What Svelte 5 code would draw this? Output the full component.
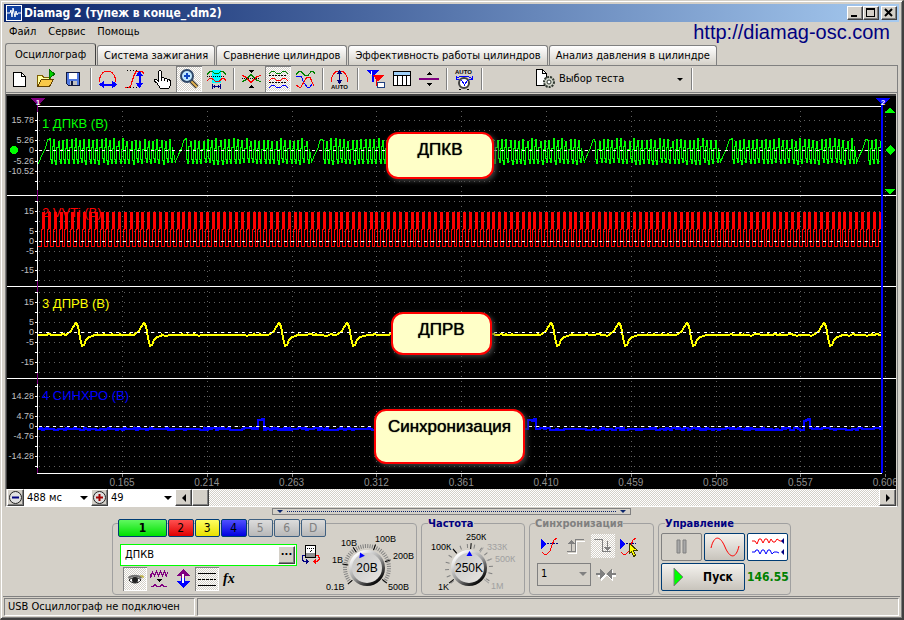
<script>
    let scopeWidth = $state(890);
    let channelName = $state("ДПКВ");
    let activeTab = $state(0);

    const tabs = [
        "Осциллограф",
        "Система зажигания",
        "Сравнение цилиндров",
        "Эффективность работы цилиндров",
        "Анализ давления в цилиндре",
    ];

    const tools = [
        { icon: "new", label: "Новый" },
        { icon: "open", label: "Открыть" },
        { icon: "save", label: "Сохранить" },
        null,
        { icon: "width", label: "Ширина" },
        { icon: "front", label: "Фронт" },
        { icon: "hand", label: "Сдвиг" },
        { icon: "zoom", label: "Масштаб", pressed: true },
        { icon: "range", label: "Диапазон" },
        null,
        { icon: "cross", label: "Совместить" },
        { icon: "split", label: "Разделить", pressed: true },
        { icon: "overlay", label: "Наложить" },
        null,
        { icon: "auto", label: "Авто" },
        null,
        { icon: "markers", label: "Маркеры" },
        { icon: "table", label: "Таблица" },
        { icon: "level", label: "Уровень" },
        null,
        { icon: "clock", label: "Авто время" },
        null,
    ];

    const channels = [
        { title: "1 ДПКВ (В)", color: "#00ff00", titleY: 33, zero: 54, top: 16, bottom: 94,
          rows: [24, 34, 44, 54, 65, 75, 85],
          labels: [["15.78", 24], ["5.26", 44], ["0", 54], ["-5.26", 65], ["-10.52", 75]] },
        { title: "2 VVTi (В)", color: "#ff0000", titleY: 122, zero: 145, top: 105, bottom: 185,
          rows: [105, 115, 125, 135, 145, 155, 164, 174, 184],
          labels: [["15", 115], ["5", 135], ["0", 145], ["-5", 155], ["-15", 174]] },
        { title: "3 ДПРВ (В)", color: "#ffff00", titleY: 213, zero: 236, top: 196, bottom: 277,
          rows: [196, 206, 216, 226, 236, 246, 256, 266, 276],
          labels: [["15", 206], ["5", 226], ["0", 236], ["-5", 246], ["-15", 266]] },
        { title: "4 СИНХРО (В)", color: "#0000ff", titleY: 305, zero: 330, top: 288, bottom: 372,
          rows: [290, 300, 310, 320, 330, 340, 350, 360, 370],
          labels: [["14.28", 300], ["4.76", 320], ["0", 330], ["-4.76", 340], ["-14.28", 360]] },
    ];

    const times = ["0.165", "0.214", "0.263", "0.312", "0.361", "0.410", "0.459", "0.508", "0.557", "0.606"];

    const notes = [
        { text: "ДПКВ", x: 379, y: 36, w: 108, h: 47 },
        { text: "ДПРВ", x: 384, y: 216, w: 101, h: 43 },
        { text: "Синхронизация", x: 367, y: 313, w: 151, h: 55 },
    ];

    const inputs = [
        { name: "1", tone: "green" },
        { name: "2", tone: "red" },
        { name: "3", tone: "yellow" },
        { name: "4", tone: "blue" },
        { name: "5", tone: "off" },
        { name: "6", tone: "off" },
        { name: "D", tone: "off" },
    ];

    // the traces are laid out on a strip 845 units wide
    const SPAN = 845;
    let plotWidth = $derived(scopeWidth - 44);
    let plotRight = $derived(30 + plotWidth);

    const gridX = (i) => 30 + ((85 + i * 84.8) / SPAN) * plotWidth;

    function noise(seed) {
        let s = seed;
        return () => {
            s = (s * 16807) % 2147483647;
            return s / 2147483647;
        };
    }

    function crankTrace() {
        const rnd = noise(11);
        let d = "M0 68";
        for (let g = 0; g < SPAN; g += 136.3) {
            d += `L${g + 1} 66L${g + 4} 59L${g + 7} 53L${g + 10} 43`;
            for (let x = g + 11; x < g + 134 && x < SPAN - 3; x += 4.3) {
                const a = Math.round(x) + 0.5;
                const top = 42 + Math.round(rnd() * 3);
                const low = 68 - Math.round(rnd() * 2);
                d += `H${a}V${top}H${a + 1}V${low - 4}H${a + 2}V${low}H${a + 3}V${top + 8}`;
            }
        }
        return d;
    }

    function pulseTrace() {
        let d = "M0 150";
        for (let x = 3; x < SPAN - 3; x += 5.85) {
            const a = Math.round(x) + 0.5;
            d += `H${a}V133H${a + 1}V116H${a + 2}V133V116H${a + 3}V150`;
        }
        return d + `H${SPAN}`;
    }

    function camTrace() {
        const rnd = noise(5);
        const peaks = [38, 106, 241, 309, 377, 513, 581, 649, 786];
        const shape = [
            [-9, -1], [-5, -4], [-3, -8], [0, -12], [2, -9], [4, 3], [6, 11],
            [8, 10], [10, 5], [13, 2], [17, 1],
        ];
        const points = [];
        for (let x = 0; x <= SPAN; x += 2) {
            if (!peaks.some((p) => x > p - 10 && x < p + 18)) {
                points.push([x, 239 + Math.round(rnd() * 2 - 1) * 0.6]);
            }
        }
        for (const p of peaks) {
            for (const [dx, dy] of shape) points.push([p + dx, 239 + dy]);
        }
        points.sort((a, b) => a[0] - b[0]);
        return "M" + points.map((p) => p.join(" ")).join("L");
    }

    function syncTrace() {
        const rnd = noise(7);
        let d = "M0 333";
        for (let x = 2; x <= SPAN; x += 2) {
            const high = [[220, 224], [489, 496], [765, 770]].some(([a, b]) => x >= a && x <= b);
            const jitter = Math.round(rnd() * 2 - 1);
            d += `H${x}V${(high ? 324 : 333) + jitter}`;
        }
        return d;
    }

    const traces = [
        { d: crankTrace(), color: "#00ff00", width: 1 },
        { d: pulseTrace(), color: "#ff0000", width: 1 },
        { d: camTrace(), color: "#ffff00", width: 2 },
        { d: syncTrace(), color: "#0000ff", width: 2 },
    ];

    const volts = {
        value: "20В",
        pointer: -24,
        step: 6,
        marks: [
            { text: "0.1В", x: 2, y: 60, angle: -130 },
            { text: "1В", x: 8, y: 33, angle: -81 },
            { text: "10В", x: 17, y: 16, angle: -34 },
            { text: "100В", x: 51, y: 12, angle: 20 },
            { text: "200В", x: 69, y: 29, angle: 71 },
            { text: "500В", x: 64, y: 60, angle: 127 },
        ],
    };

    const rate = {
        value: "250K",
        pointer: 2,
        step: 18,
        marks: [
            { text: "1K", x: 12, y: 60, angle: -127 },
            { text: "100К", x: 5, y: 20, angle: -40 },
            { text: "250К", x: 40, y: 10, angle: 5 },
            { text: "333К", x: 61, y: 20, angle: 35, off: true },
            { text: "500К", x: 69, y: 32, angle: 68, off: true },
            { text: "1М", x: 65, y: 59, angle: 127, off: true },
        ],
    };

    function ring(step) {
        const out = [];
        for (let a = -130; a <= 130; a += step) out.push(a);
        return out;
    }
</script>

{#snippet icon(name)}
    <svg width="24" height="24" viewBox="0 0 24 24" fill="none" shape-rendering="crispEdges" aria-hidden="true">
        {#if name === "new"}
            <path d="M6.500 5.500h8l4 4v10h-12z" fill="#fff" stroke="#000" />
            <path d="M14.500 5.500v4h4" stroke="#000" />
        {:else if name === "open"}
            <path d="M3.500 19.500v-11h5l1 2h7v3" fill="#ffffa0" stroke="#806000" />
            <path d="M3.500 19.500l4-7h12l-4 7z" fill="#f8c848" stroke="#604000" />
            <path d="M15.500 2.500l5 4.500l-5 4.500z" fill="#00d000" stroke="#007000" />
        {:else if name === "save"}
            <path d="M5.500 5.500h13v13h-11l-2-2z" fill="#5078e0" stroke="#101840" />
            <rect x="8" y="6" width="8" height="6" fill="#fff" />
            <rect x="9" y="14" width="7" height="4" fill="#c0c0c0" />
            <rect x="10" y="14" width="2" height="4" fill="#101840" />
        {:else if name === "width"}
            <path d="M3.500 15v-3l1-3l2-3l3-2h4l3 2l2 3l1 3v3" stroke="#f00" />
            <path d="M6 17.500h12" stroke="#00f" stroke-width="2" />
            <path d="M3 17.500l5-4v8zM21 17.500l-5-4v8z" fill="#00f" />
        {:else if name === "front"}
            <path d="M2 20.500h4l2-2l1-4l2-6l2-4h6l2 2" stroke="#f00" />
            <path d="M4 3.500h12M4 20.500h14" stroke="#000" stroke-dasharray="1 2" />
            <path d="M16.500 8v9" stroke="#00f" stroke-width="2" />
            <path d="M16.500 4l-4 5h8zM16.500 21l-4-5h8z" fill="#00f" />
        {:else if name === "hand"}
            <path
                d="M8.500 14.500v-10l1-1h1l1 1v6h2l1 1h2l1 1h2l1 2v4l-2 3h-8l-4-6l-2-1v-2h2z"
                fill="#fff" stroke="#000"
            />
            <path d="M11.500 10v4M14.500 11v3M17.500 12v3" stroke="#000" />
        {:else if name === "zoom"}
            <g shape-rendering="auto">
                <path d="M14 14l6 6" stroke="#303030" stroke-width="4" />
                <path d="M14 14l6 6" stroke="#e0b050" stroke-width="2" />
                <circle cx="10" cy="9" r="6" fill="#c0e8ff" stroke="#304868" stroke-width="2" />
                <path d="M7 9h6M10 6v6" stroke="#1048c0" stroke-width="2" />
            </g>
        {:else if name === "range"}
            <rect x="8" y="3" width="9" height="13" fill="#0ff" />
            <path d="M3 7.500l3-3h2l3 2h3l3-2h2l3 3" stroke="#008000" />
            <path d="M3 9.500h18" stroke="#000" stroke-dasharray="1 1" />
            <path d="M3 13.500l3-2h2l4 3h3l3-3h2l2 2" stroke="#f00" />
            <path d="M8 19.500h9M8.500 17v5M16.500 17v5M10.500 18v3M14.500 18v3" stroke="#000080" />
        {:else if name === "cross"}
            <path d="M3 14.500l3-1l6-6l6 6l4 1" stroke="#008000" />
            <path d="M3 8.500l3 1l6 6l6-6l4-1" stroke="#f00" />
            <path d="M3 11.500h18" stroke="#000" stroke-dasharray="1 1" />
            <path d="M9 3h6l-3 3zM9 21h6l-3-3z" fill="#000" />
        {:else if name === "split"}
            <path d="M3 6.500l3-2h2l3 2h3l3-2h2l3 2" stroke="#008000" />
            <path d="M3 8.500h18M3 15.500h18" stroke="#000" stroke-dasharray="2 1" />
            <path d="M3 13.500l3-2h2l3 2h3l3-2h2l3 2" stroke="#f00" />
            <path d="M3 20.500l3-2h2l3 2h3l3-2h2l3 2" stroke="#00f" />
        {:else if name === "overlay"}
            <path d="M3 7.500l3-3h2l4 4h3l3-4h2l2 2" stroke="#008000" />
            <path d="M3 10l3-1h2l3 7l3 4h3l3-4" stroke="#00f" />
            <path d="M3 18l3 2h2l3-5l3-5h3l2 5l2 4" stroke="#f00" />
        {:else if name === "auto"}
            <path d="M3.500 15v-4l2-4l3-3h6l3 3l2 4v4" stroke="#f00" />
            <path d="M11.500 5v10" stroke="#000080" />
            <path d="M11.500 3l-3 4h6zM11.500 17l-3-4h6z" fill="#000080" />
            <text x="3" y="22" class="tiny">AUTO</text>
        {:else if name === "markers"}
            <path d="M3 3h13l-5 6v6h-2v-6z" fill="#00f" />
            <path d="M10 8h11l-5 6h-2z" fill="#f00" />
            <path d="M13.500 11v8" stroke="#f00" />
            <path d="M14.500 15.500h7v5h-7z" fill="#fff" stroke="#204080" />
            <path d="M8.500 4v4" stroke="#fff" />
        {:else if name === "table"}
            <rect x="3" y="4" width="18" height="4" fill="#a0d0f8" />
            <rect x="3" y="8" width="18" height="11" fill="#fff" />
            <path d="M3.500 4.500h17v14h-17zM3 8.500h18M7.500 8v10M12.500 8v10M16.500 8v10" stroke="#000" />
        {:else if name === "level"}
            <path d="M2 12h20" stroke="#800080" stroke-width="2" />
            <path d="M9 8h6l-3-3zM9 16h6l-3 3z" fill="#000" />
        {:else if name === "clock"}
            <text x="3" y="7" class="tiny">AUTO</text>
            <circle cx="12" cy="16" r="5" fill="#fff" stroke="#404040" stroke-width="2" shape-rendering="auto" />
            <path d="M9.500 13l3 5l3-5" stroke="#00f" />
            <path d="M4 12c4-4 12-4 16 0M4 9v3h3M20 9v3h-3" stroke="#00f" />
            <path d="M7 22h2M15 22h2" stroke="#000" />
        {:else if name === "test"}
            <path d="M4.500 2.500h6l4 4v12h-10z" fill="#fff" stroke="#000" />
            <path d="M10.500 2.500v4h4" stroke="#000" />
            <g shape-rendering="auto">
                <circle cx="17" cy="15" r="5" fill="#d0d4c8" stroke="#303830" stroke-width="2" stroke-dasharray="2 1" />
                <circle cx="17" cy="15" r="2" fill="#fff" stroke="#303830" />
            </g>
        {:else if name === "meter"}
            <rect x="7.500" y="2.500" width="10" height="12" fill="#fff" stroke="#000" />
            <rect x="8" y="10" width="9" height="4" fill="#909090" />
            <path d="M9 5.500h7M12 9l3-3" stroke="#000" stroke-dasharray="1 1" />
            <path d="M7 12.500h-2l-1 2v2l2 2h2" stroke="#000080" />
            <path d="M8 15l3 3.500l-3 3.500z" fill="#000080" />
            <path d="M18 12.500h2l1 2v2l-2 2h-2" stroke="#f00" />
            <path d="M18 15l-3 3.500l3 3.500z" fill="#f00" />
        {:else if name === "eye"}
            <g shape-rendering="auto">
                <path d="M5 10c4-3 10-3 14 0l-1 2c-4-3-9-3-12 0z" fill="#707070" />
                <path d="M6 13c3-3 9-3 12 0c-3 4-9 4-12 0z" fill="#fff" stroke="#202020" />
                <circle cx="12" cy="13" r="3" fill="#202020" />
                <path d="M17 9h3v2" stroke="#b0a000" />
            </g>
        {:else if name === "smooth"}
            <path d="M3.500 7v3l2-5l2 3l2-4l2 4l2-4l2 4l2-4l2 5l1-4" stroke="#800080" />
            <path d="M3.500 8v3l2-5l2 3l2-4l2 4l2-4l2 4l2-4l2 5" stroke="#800080" />
            <path d="M9 12h6l-3 3z" fill="#000" />
            <path d="M4 19.500h2l2-2l2 2h3l2-2l2 2h3" stroke="#800080" />
        {:else if name === "updown"}
            <path d="M12 2l7 7h-5v3h-4v-3h-5z" fill="#800080" />
            <path d="M12 21l7-7h-5v-3h-4v3h-5z" fill="#00f" />
            <path d="M12 7v9" stroke="#fff" stroke-width="2" />
        {:else if name === "lines"}
            <path d="M3 6.500h18M3 18.500h18" stroke="#000" />
            <path d="M3 12.500h18" stroke="#000" stroke-dasharray="3 1" />
        {:else if name === "sync-edge"}
            <path d="M5 18l2 2h3l3-3l2-6l2-5l3-2" stroke="#f00" />
            <path d="M4 5l6 5l-6 5z" fill="#00f" />
            <path d="M10 9.500h11" stroke="#000080" stroke-dasharray="2 1" />
        {:else if name === "sync-rise"}
            <path d="M3 18.500h8v-12h9" stroke="#fff" transform="translate(1 1)" />
            <path d="M3 17.500h8v-12h9M7.500 8v9" stroke="#808080" />
            <path d="M4 10l3.500-4l3.500 4z" fill="#808080" />
        {:else if name === "sync-fall"}
            <path d="M3 5.500h8v12h9M16.500 7v8" stroke="#808080" />
            <path d="M13 13l3.500 4l3.500-4z" fill="#808080" />
        {:else if name === "sync-pick"}
            <path d="M3 18l2 2h3l3-3l2-6l2-5l3-2" stroke="#f00" />
            <path d="M2 5l6 5l-6 5z" fill="#00f" />
            <path d="M8 9.500h10" stroke="#000080" stroke-dasharray="2 1" />
            <path d="M11.500 9.500l8 7h-4l2 5l-2 1l-2-5l-2 2z" fill="#ff0" stroke="#404000" />
        {:else if name === "squeeze"}
            <path d="M3 11h3v-4l6 5l6-5v4h3v3h-3v4l-6-5l-6 5v-4h-3z" fill="#fff" transform="translate(1 1)" />
            <path d="M2 11h4v-4l6 5l6-5v4h4v2h-4v4l-6-5l-6 5v-4h-4z" fill="#808080" />
        {/if}
    </svg>
{/snippet}

{#snippet knob(k, id)}
    <svg class="knob" width="90" height="66" viewBox="2 0 90 66" role="img" aria-label={k.value}>
        <defs>
            <linearGradient id="rim-{id}" x1="0.200" y1="0.100" x2="0.800" y2="0.900">
                <stop offset="0" stop-color="#fff" />
                <stop offset="0.500" stop-color="#a0a0a0" />
                <stop offset="1" stop-color="#000" />
            </linearGradient>
            <linearGradient id="face-{id}" x1="0" y1="0" x2="1" y2="1">
                <stop offset="0" stop-color="#c4c4c4" />
                <stop offset="1" stop-color="#e8e6e2" />
            </linearGradient>
        </defs>
        {#each ring(k.step) as a}
            <path d="M43 18v-4" stroke="#808080" transform="rotate({a} 43 38)" />
        {/each}
        {#each k.marks as m}
            <path d="M43 19v-6" stroke={m.off ? "#a0a0a0" : "#000"} transform="rotate({m.angle} 43 38)" />
            <text x={m.x} y={m.y} class="scale" class:off={m.off}>{m.text}</text>
        {/each}
        <circle cx="43" cy="38" r="18" fill="url(#rim-{id})" />
        <circle cx="43" cy="38" r="15" fill="url(#face-{id})" />
        <path d="M43 21l3 5h-6z" fill="#00f" transform="rotate({k.pointer} 43 38)" />
        <text x="43" y="42" class="value">{k.value}</text>
    </svg>
{/snippet}

<div class="window">
    <header class="titlebar">
        <svg class="logo" width="16" height="16" viewBox="0 0 16 16" aria-hidden="true">
            <rect width="16" height="16" fill="#fff" />
            <rect x="1" y="1" width="14" height="14" fill="#1040a0" />
            <path d="M1 8h3l1-3l1 7l1-9l2 9l1-6l1 4l1-2h3" fill="none" stroke="#fff" />
        </svg>
        <h1>Diamag 2 (тупеж в конце_.dm2)</h1>
        <div class="winbuttons">
            <button class="raised" aria-label="Свернуть">
                <svg width="10" height="10"><path d="M1 8h6" stroke="#000" stroke-width="2" /></svg>
            </button>
            <button class="raised" aria-label="Развернуть">
                <svg width="10" height="10" shape-rendering="crispEdges"><path d="M0 1h9M.5 1v8M0 8.500h9M8.500 1v8" stroke="#000" fill="none" /><path d="M0 1h9" stroke="#000" stroke-width="2" /></svg>
            </button>
            <button class="raised close" aria-label="Закрыть">
                <svg width="10" height="10"><path d="M1 1l7 7M8 1l-7 7" stroke="#000" stroke-width="2" /></svg>
            </button>
        </div>
    </header>

    <nav class="menu">
        <button>Файл</button>
        <button>Сервис</button>
        <button>Помощь</button>
        <a href="http://diamag-osc.com">http://diamag-osc.com</a>
    </nav>

    <div class="tabs" role="tablist">
        {#each tabs as tab, i}
            <button role="tab" aria-selected={activeTab === i} class:active={activeTab === i} onclick={() => (activeTab = i)}>
                {tab}
            </button>
        {/each}
    </div>

    <main class="page">
        <div class="toolbar">
            {#each tools as tool}
                {#if tool}
                    <button class="tool" class:pressed={tool.pressed} aria-label={tool.label}>
                        {@render icon(tool.icon)}
                    </button>
                {:else}
                    <span class="sep"></span>
                {/if}
            {/each}
            <button class="test">
                {@render icon("test")}
                <span>Выбор теста</span>
                <i class="arrow"></i>
            </button>
            <span class="sep"></span>
        </div>

        <div class="scope" bind:clientWidth={scopeWidth}>
            <svg width="100%" height="393" shape-rendering="crispEdges">
                {#each channels as ch}
                    {#each ch.rows as y}
                        <path d="M32 {y + 0.5}H{plotRight}" stroke="#606060" stroke-dasharray="1 4" />
                        <path d="M28 {y + 0.5}h3" stroke="#fff" />
                    {/each}
                {/each}
                {#each times as t, i}
                    <path d="M{Math.round(gridX(i)) + 0.5} 15V377" stroke="#606060" stroke-dasharray="1 4" />
                    <path d="M{Math.round(gridX(i)) + 0.5} 378v3" stroke="#808080" />
                    <text x={gridX(i)} y="390" class="time">{t}</text>
                {/each}

                <path d="M30 10.500H{plotRight}M30 377.500H{plotRight}" stroke="#fff" />
                <path d="M0 99.500H{scopeWidth}M0 190.500H{scopeWidth}M0 282.500H{scopeWidth}" stroke="#fff" />
                <path d="M30.500 8V377" stroke="#800080" />

                {#each channels as ch}
                    <text x="35" y={ch.titleY - 1} class="title" fill={ch.color}>{ch.title}</text>
                    <path d="M30.500 {ch.top}V{ch.bottom}" stroke="#fff" />
                    {#each ch.labels as [text, y]}
                        <text x="27" y={y + 3} class="volt">{text}</text>
                    {/each}
                {/each}

                <svg x="31" y="0" width={plotWidth} height="393" viewBox="0 0 {SPAN} 393" preserveAspectRatio="none" fill="none">
                    {#each traces as t}
                        <path d={t.d} stroke={t.color} stroke-width={t.width} />
                    {/each}
                </svg>

                {#each channels as ch}
                    <path d="M32 {ch.zero + 0.5}H{plotRight}" stroke="#fff" stroke-dasharray="3 4" />
                {/each}

                <path d="M{plotRight} 8V377" stroke="#00f" stroke-width="2" />
                <path d="M23 2h15l-7 8z" fill="#800080" />
                <path d="M{plotRight - 7} 2h15l-7 8z" fill="#00f" />
                <text x="31" y="9" class="flag">1</text>
                <text x={plotRight + 1} y="9" class="flag">2</text>
                <circle cx="7" cy="54" r="4" fill="#0f0" />
                <path
                    d="M{plotRight + 3} 17l5-6l5 6zM{plotRight + 3} 54l5-5l5 5l-5 5zM{plotRight + 3} 93h10l-5 6z"
                    fill="#0f0"
                />
            </svg>
            {#each notes as n}
                <div class="note" style="left: {31 + ((n.x - 31) / SPAN) * plotWidth}px; top: {n.y}px; width: {n.w}px; height: {n.h}px">
                    {n.text}
                </div>
            {/each}
        </div>

        <div class="scrollrow">
            <button class="raised step" aria-label="Уменьшить">
                <svg width="13" height="13"><circle cx="6.500" cy="6.500" r="6" fill="#e0e0e0" stroke="#202020" /><path d="M3 6.500h7" stroke="#000080" stroke-width="2" /></svg>
            </button>
            <span class="combo">
                <select aria-label="Развёртка"><option>488 мс</option></select>
                <i class="arrow"></i>
            </span>
            <button class="raised step" aria-label="Увеличить">
                <svg width="13" height="13"><circle cx="6.500" cy="6.500" r="6" fill="#e0e0e0" stroke="#202020" /><path d="M3 6.500h7M6.500 3v7" stroke="#a00000" stroke-width="2" /></svg>
            </button>
            <span class="combo">
                <select aria-label="Точка"><option>49</option></select>
                <i class="arrow"></i>
            </span>
            <button class="raised step" aria-label="Влево">
                <svg width="10" height="10"><path d="M7 1v8l-4-4z" /></svg>
            </button>
            <div class="track"><span class="raised thumb"></span></div>
            <button class="raised step" aria-label="Вправо">
                <svg width="10" height="10"><path d="M3 1v8l4-4z" /></svg>
            </button>
        </div>
    </main>

    <div class="splitter">
        <i class="arrow"></i><span></span><i class="arrow"></i>
    </div>

    <section class="panel">
        <div class="group channel">
            <div class="settings">
                <div class="inputs">
                    {#each inputs as ch}
                        <button class={ch.tone} disabled={ch.tone === "off"}>{ch.name}</button>
                    {/each}
                </div>
                <div class="naming">
                    <div class="namebox">
                        <input type="text" aria-label="Название канала" bind:value={channelName} />
                        <button class="raised" aria-label="Выбрать датчик">···</button>
                    </div>
                    <button class="flat" aria-label="Прибор">{@render icon("meter")}</button>
                </div>
                <div class="options">
                    <button class="flat pressed" aria-label="Видимость">{@render icon("eye")}</button>
                    <button class="flat" aria-label="Сглаживание">{@render icon("smooth")}</button>
                    <button class="flat" aria-label="Инверсия">{@render icon("updown")}</button>
                    <button class="flat pressed" aria-label="Линии">{@render icon("lines")}</button>
                    <button class="flat fx">fx</button>
                </div>
            </div>
            {@render knob(volts, "volts")}
        </div>

        <fieldset class="group">
            <legend>Частота</legend>
            {@render knob(rate, "rate")}
        </fieldset>

        <fieldset class="group sync">
            <legend class="off">Синхронизация</legend>
            <div class="row">
                <button class="flat" aria-label="По уровню">{@render icon("sync-edge")}</button>
                <button class="flat" aria-label="Передний фронт">{@render icon("sync-rise")}</button>
                <button class="flat dither" aria-label="Задний фронт">{@render icon("sync-fall")}</button>
                <button class="flat" aria-label="Указать">{@render icon("sync-pick")}</button>
            </div>
            <div class="row">
                <span class="combo bordered">
                    <select aria-label="Канал синхронизации" disabled><option>1</option></select>
                    <i class="arrow"></i>
                </span>
                <button class="flat" aria-label="Центр">{@render icon("squeeze")}</button>
            </div>
        </fieldset>

        <fieldset class="group control">
            <legend>Управление</legend>
            <div class="controls">
                <button class="xp" disabled aria-label="Пауза">
                    <svg width="14" height="16"><path d="M2 1h3v13h-3zM8 1h3v13h-3z" fill="#a8a8a8" stroke="#808080" /></svg>
                </button>
                <button class="xp" aria-label="Один кадр">
                    <svg width="30" height="22"><path d="M1 12C4 -1 10 -1 15 11S26 23 29 10" fill="none" stroke="#f00" /></svg>
                </button>
                <button class="xp on" aria-label="Поток">
                    <svg width="34" height="22" fill="none">
                        <path d="M1 5h3l2 3l2-5h2l2 4l2-4h2l2 4l2-4l2 3h2l2-3l3 2h2" stroke="#f00" />
                        <path d="M1 16h3l1-2h2l2 4l2-4h2l2 4l2-4h2l2 4l2-2h3l2 1" stroke="#00f" />
                        <path d="M33 2v6l-3-3zM33 13v6l-3-3z" fill="#000080" />
                    </svg>
                </button>
                <button class="xp start">
                    <svg width="12" height="20"><path d="M1 1l9 9l-9 9z" fill="#0f0" stroke="#808080" /></svg>
                    <span>Пуск</span>
                </button>
                <output>146.55</output>
            </div>
        </fieldset>
    </section>

    <footer class="status">
        <span>USB Осциллограф не подключен</span>
        <span></span>
    </footer>
</div>

<style>
    :global(body) {
        margin: 0;
        background: #d4d0c8;
    }

    .window {
        box-sizing: border-box;
        min-height: 100vh;
        display: flex;
        flex-direction: column;
        padding: 2px;
        border: 1px solid #404040;
        border-width: 1px 2px 2px 1px;
        border-color: #d4d0c8 #404040 #404040 #d4d0c8;
        box-shadow: inset 1px 1px #fff, inset -1px -1px #808080;
        background: #d4d0c8;
        color: #000;
        font: 11px/14px "DejaVu Sans Condensed", "Liberation Sans", sans-serif;
    }

    button,
    input,
    select {
        font: inherit;
        color: inherit;
        margin: 0;
        padding: 0;
        border: 0;
        background: none;
        border-radius: 0;
    }

    svg {
        display: block;
    }

    .raised {
        box-sizing: border-box;
        display: flex;
        align-items: center;
        justify-content: center;
        background: #d4d0c8;
        border: 1px solid;
        border-color: #fff #404040 #404040 #fff;
        box-shadow: inset -1px -1px #808080;
    }

    .arrow {
        border: 4px solid transparent;
        border-top-color: #000;
        border-bottom: 0;
    }

    .titlebar {
        display: flex;
        align-items: center;
        height: 18px;
        margin: 1px 1px 0;
        padding: 0 2px;
        background: linear-gradient(to right, #0a246a, #a6caf0);
        color: #fff;
    }

    h1 {
        flex: 1;
        margin: 0 2px;
        font-size: 12px;
        font-weight: bold;
    }

    .winbuttons {
        display: flex;
    }

    .winbuttons button {
        width: 16px;
        height: 14px;
    }

    .winbuttons .close {
        margin-left: 2px;
    }

    .menu {
        display: flex;
        align-items: center;
        gap: 12px;
        height: 20px;
        padding: 0 10px 0 6px;
    }

    .menu a {
        margin-left: auto;
        font: 20px/20px "Liberation Sans", Arial, sans-serif;
        color: #000080;
        text-decoration: none;
    }

    .tabs {
        display: flex;
        align-items: flex-end;
        gap: 1px;
        height: 23px;
        padding-left: 2px;
    }

    .tabs button {
        height: 20px;
        padding: 0 6px;
        border: 1px solid #808080;
        border-bottom: 0;
        border-radius: 3px 3px 0 0;
        background: linear-gradient(#fff, #d4d0c8);
        white-space: nowrap;
    }

    .tabs .active {
        height: 22px;
        padding: 0 9px;
        background: #d4d0c8;
        border-right-color: #404040;
    }

    .page {
        margin: 0 2px;
        border: 1px solid #808080;
        border-bottom-color: #fff;
    }

    .toolbar {
        display: flex;
        align-items: center;
        gap: 1px;
        height: 26px;
        margin-bottom: 1px;
        border-bottom: 1px solid #808080;
    }

    .tool {
        display: grid;
        place-items: center;
        box-sizing: border-box;
        width: 26px;
        height: 26px;
    }

    .pressed,
    .dither,
    .track {
        background: repeating-conic-gradient(#fff 0 25%, #d4d0c8 0 50%) 0 0 / 2px 2px;
    }

    .pressed {
        box-shadow: inset 1px 1px #808080, inset -1px -1px #fff;
    }

    .sep {
        box-sizing: border-box;
        width: 2px;
        height: 22px;
        margin: 0 2px 0 3px;
        border-left: 1px solid #808080;
        border-right: 1px solid #fff;
    }

    .test {
        display: flex;
        align-items: center;
        gap: 3px;
        width: 155px;
        margin-left: 46px;
        text-align: left;
    }

    .test span {
        flex: 1;
    }

    .test .arrow {
        border-width: 3px 3px 0;
        margin-right: 4px;
    }

    .scope {
        position: relative;
        margin-right: 1px;
        border: 1px solid #404040;
        border-width: 2px 0 0 1px;
        background: #000;
        overflow: hidden;
    }

    .title {
        font: 13px "Liberation Sans", Arial, sans-serif;
    }

    .time {
        font: 10px "Liberation Sans", Arial, sans-serif;
        fill: #909090;
        text-anchor: middle;
    }

    .volt {
        font: 9px "Liberation Sans", Arial, sans-serif;
        fill: #c0c0c0;
        text-anchor: end;
    }

    .flag {
        font: bold 8px "Liberation Sans", Arial, sans-serif;
        fill: #fff;
        text-anchor: middle;
    }

    .tiny {
        font: bold 6px "Liberation Sans", Arial, sans-serif;
        fill: #000;
    }

    .note {
        position: absolute;
        box-sizing: border-box;
        padding-top: 6px;
        border: 2px solid #f00;
        border-radius: 12px;
        background: #ffffc8;
        box-shadow: 2px 2px 5px #404040;
        font: 17px/20px "Liberation Sans", Arial, sans-serif;
        text-shadow: 0 0 1px #000;
        text-align: center;
    }

    .scrollrow {
        display: flex;
        height: 17px;
        margin-left: 1px;
        margin-right: 1px;
    }

    .step {
        width: 17px;
        height: 17px;
    }

    .combo {
        display: grid;
        grid-template-columns: 1fr 14px;
        align-items: center;
        box-sizing: border-box;
        width: 67px;
        background: #fff;
    }

    .combo select {
        grid-area: 1 / 1 / 2 / 3;
        width: 100%;
        appearance: none;
        padding-left: 3px;
        opacity: 1;
    }

    .combo .arrow {
        grid-area: 1 / 2;
        justify-self: center;
        pointer-events: none;
    }

    .track {
        flex: 1;
    }

    .thumb {
        width: 17px;
        height: 17px;
    }

    .splitter {
        display: flex;
        align-items: center;
        align-self: center;
        box-sizing: border-box;
        gap: 4px;
        width: 40%;
        height: 7px;
        margin-top: 1px;
        padding: 0 4px;
        border: 1px solid #808080;
    }

    .splitter span {
        flex: 1;
        border-top: 1px dotted #0a246a;
    }

    .splitter .arrow {
        border-width: 3px 3px 0;
        border-top-color: #0a246a;
    }

    .panel {
        display: flex;
        flex: 1;
        flex-wrap: wrap;
        justify-content: center;
        align-items: flex-start;
        gap: 4px;
        padding: 2px 0 0;
    }

    .group {
        box-sizing: border-box;
        height: 78px;
        margin: 0;
        padding: 0 6px;
        border: 1px solid #a0a0a0;
        border-radius: 4px;
    }

    .group legend {
        padding: 0;
        font-weight: bold;
        line-height: 13px;
        color: #000080;
    }

    .group .off {
        color: #808080;
    }

    .channel {
        display: flex;
        height: 72px;
        margin-top: 6px;
        padding: 0 0 0 5px;
    }

    .settings {
        width: 208px;
        margin-top: -5px;
    }

    .inputs {
        display: flex;
        gap: 1px;
    }

    .inputs button {
        flex: 1;
        height: 18px;
        border: 1px solid #003c74;
        border-radius: 2px;
        font-size: 12px;
        line-height: 14px;
    }

    .inputs .green {
        flex: 2;
        font-weight: bold;
        background: linear-gradient(#60f860, #00e000);
    }

    .inputs .red {
        background: linear-gradient(#ff5050, #e00000);
    }

    .inputs .yellow {
        background: linear-gradient(#ffff60, #e8e000);
    }

    .inputs .blue {
        background: linear-gradient(#5050ff, #0000e0);
    }

    .inputs .off {
        background: linear-gradient(#dcdcdc, #b8b8b8);
        border-color: #406080;
        color: #808080;
    }

    .naming {
        display: flex;
        align-items: center;
        gap: 1px;
        margin-top: 6px;
        padding-left: 2px;
    }

    .namebox {
        display: flex;
        box-sizing: border-box;
        width: 177px;
        height: 22px;
        padding: 1px;
        border: 1px solid #0f0;
        background: #fff;
    }

    .namebox input {
        flex: 1;
        min-width: 0;
        padding-left: 3px;
    }

    .namebox button {
        width: 17px;
        font-weight: bold;
    }

    .options {
        display: flex;
        padding-left: 5px;
    }

    .fx {
        padding-left: 4px;
        font: italic bold 14px/20px "Liberation Serif", serif;
    }

    .knob {
        margin-top: 6px;
    }

    fieldset .knob {
        margin-top: 0;
    }

    .scale {
        font: 9px "Liberation Sans", Arial, sans-serif;
    }

    .scale.off {
        fill: #a0a0a0;
    }

    .value {
        font: 12px "Liberation Sans", Arial, sans-serif;
        text-anchor: middle;
    }

    .sync {
        width: 125px;
        padding: 0 5px;
    }

    .row {
        display: flex;
        align-items: center;
        gap: 3px;
        padding: 4px 2px 0;
    }

    .bordered {
        width: 54px;
        height: 23px;
        border: 1px solid #808080;
        background: none;
    }

    .bordered .arrow {
        border-top-color: #808080;
    }

    .control {
        padding: 0 2px;
    }

    .control legend {
        margin-left: 4px;
    }

    .controls {
        display: grid;
        grid-template-columns: repeat(3, 41px);
        gap: 2px;
        margin-top: 3px;
    }

    .xp {
        display: flex;
        align-items: center;
        justify-content: center;
        height: 28px;
        border: 1px solid #003c74;
        border-radius: 2px;
        background: linear-gradient(#f4f2ee, #c8c4bc);
    }

    .xp:disabled {
        border-color: #808080;
        background: none;
    }

    .xp.on {
        background: #fff;
    }

    .start {
        grid-column: span 2;
        gap: 18px;
        font-size: 12px;
        font-weight: bold;
    }

    output {
        align-self: center;
        color: #008000;
        font-size: 12px;
        font-weight: bold;
    }

    .status {
        display: flex;
        gap: 2px;
        padding: 1px 1px 0;
        border-top: 1px solid #808080;
    }

    .status span {
        box-sizing: border-box;
        height: 18px;
        min-width: 191px;
        padding: 1px 3px;
        border: 1px solid;
        border-color: #808080 #fff #fff #808080;
    }

    .status span:last-child {
        flex: 1;
    }
</style>
